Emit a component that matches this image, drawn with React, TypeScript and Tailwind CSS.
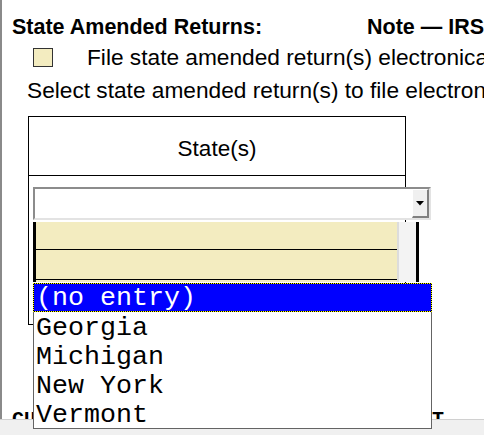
import React from 'react';

const STATES = ['(no entry)', 'Georgia', 'Michigan', 'New York', 'Vermont'];

function ComboArrow() {
  return (
    <svg width="8" height="5" viewBox="0 0 8 5">
      <path d="M0 0 H8 L4 4.5 Z" fill="#000" />
    </svg>
  );
}

export default function App() {
  return (
    <div className="relative w-[484px] h-[435px] overflow-hidden bg-white text-black font-['Liberation_Sans',Arial,sans-serif]">
      {/* Page */}
      <div className="h-[419px] overflow-hidden border-l-2 border-[#8a8a8a] pl-[10px] pt-[15px]">
        <div className="flex whitespace-nowrap text-[21.5px] leading-[24px] font-bold">
          <span className="w-[355px] shrink-0">State Amended Returns:</span>
          <span>Note — IRS does not accept amended returns</span>
        </div>

        <div className="mt-[6px] flex items-center h-[24px] whitespace-nowrap">
          <div className="ml-[21px] w-[20px] h-[19px] shrink-0 border border-[#333] bg-[#f3ecc0]" />
          <span className="ml-[34px] text-[22.7px] leading-[24px]">File state amended return(s) electronically</span>
        </div>

        <div className="mt-[9px] pl-[15px] whitespace-nowrap text-[22.7px] leading-[24px]">
          Select state amended return(s) to file electronically
        </div>

        {/* State(s) table */}
        <div className="mt-[14px] ml-[16px] w-[378px] border border-black">
          <div className="h-[59px] pt-[20px] text-center text-[22.5px] leading-[24px] border-b border-black">State(s)</div>
          <div className="h-[148px] pt-[11px] pl-[4px]">
            <div className="w-[398px]">
              {/* combo box */}
              <div className="flex h-[33px] border-2 border-t-[#8c8c8c] border-l-[#8c8c8c] border-b-[#e3e3e3] border-r-[#e3e3e3] bg-white">
                <div className="flex-1" />
                <div className="w-[17px] flex items-center justify-center bg-[#f0f0f0] border-t border-l border-white border-r-2 border-b-2 border-r-[#808080] border-b-[#808080]">
                  <ComboArrow />
                </div>
              </div>
              {/* grid rows */}
              <div className="mt-[2px] flex h-[60px] w-[386px]">
                <div className="w-[3px] bg-black" />
                <div className="flex-1 flex flex-col bg-[#f3ecc0]">
                  <div className="h-[28px] border-b border-black" />
                  <div className="h-[30px] border-b border-black" />
                </div>
                <div className="w-[19px] border-l-2 border-[#dcdcdc] bg-[#f3f3f3]" />
                <div className="w-[3px] bg-black" />
              </div>
            </div>
          </div>
        </div>

        <div className="mt-[83px] whitespace-pre font-['Liberation_Mono','Courier_New',monospace] font-bold text-[20px] leading-[24px]">
          CURRENT YEAR AMENDED RETURN - FORMAT
        </div>
      </div>

      {/* status strip */}
      <div className="h-[16px] border-t border-[#d0d0d0] bg-[#f0f0f0]" />

      {/* open drop-down list */}
      <div className="absolute left-[33px] top-[283px] w-[399px] h-[146px] border border-[#646464] bg-white font-['Liberation_Mono','Courier_New',monospace] text-[26.67px] leading-[29px]">
        {STATES.map((s, i) =>
          i === 0 ? (
            <div key={s} className="-mx-px -mt-px bg-black">
              <div className="h-[29px] pl-[2px] pt-[1px] border border-dotted border-[#ffff00] bg-[#0000ff] bg-clip-padding text-white leading-[27px] whitespace-pre overflow-hidden">
                {s}
              </div>
            </div>
          ) : (
            <div key={s} className="h-[29px] pl-[2px] pt-[2px] whitespace-pre overflow-hidden">{s}</div>
          )
        )}
      </div>
    </div>
  );
}
